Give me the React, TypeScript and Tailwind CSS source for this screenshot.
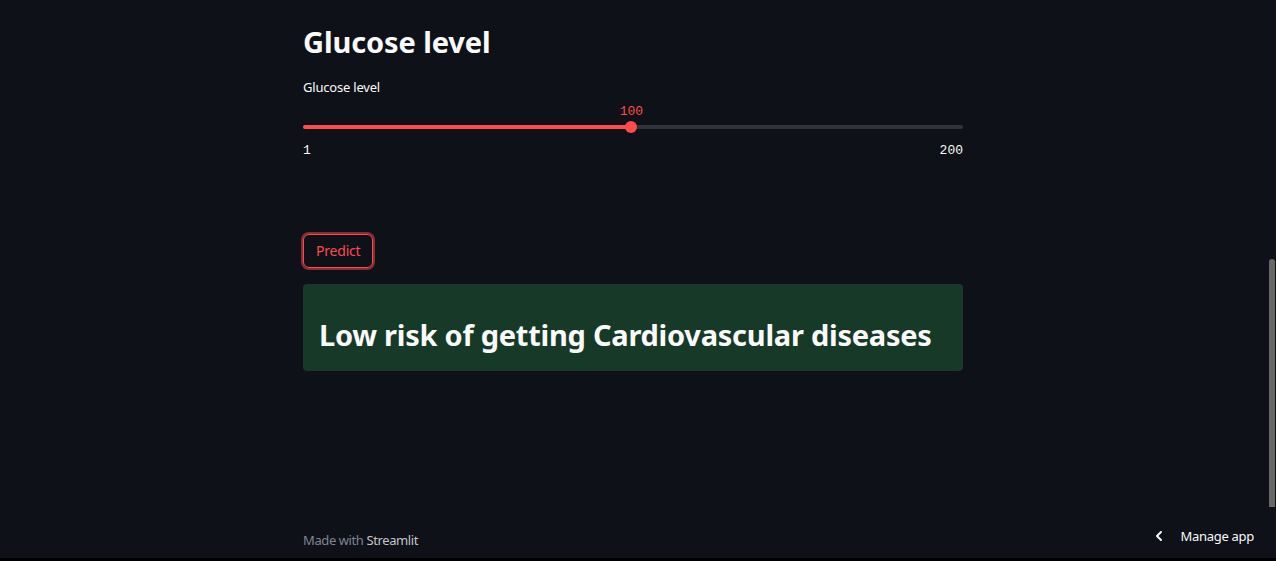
import { ChevronLeft } from "lucide-react";

const sans = { fontFamily: '"Noto Sans", "Open Sans", sans-serif' };

function Slider({ min, max, value }: { min: number; max: number; value: number }) {
  const pct = ((value - min) / (max - min)) * 100;
  return (
    <div className="flex flex-col">
      <div className="relative h-[38px]">
        <div
          className="absolute top-[6px] -translate-x-1/2 font-['Liberation_Mono',monospace] text-[13px] leading-4 text-[#ff4b4b]"
          style={{ left: `${pct}%` }}
        >
          {value}
        </div>
        <div className="absolute left-0 right-0 top-[27px] h-1 rounded-full bg-[#31333a]" />
        <div className="absolute left-0 top-[27px] h-1 rounded-full bg-[#ff4b4b]" style={{ width: `${pct}%` }} />
        <div
          className="absolute top-[23px] h-3 w-3 -translate-x-1/2 rounded-full bg-[#ff4b4b]"
          style={{ left: `${pct}%` }}
        />
      </div>
      <div className="mt-[7px] flex justify-between font-['Liberation_Mono',monospace] text-[13px] leading-4 text-[#fafafa]">
        <span>{min}</span>
        <span>{max}</span>
      </div>
    </div>
  );
}

export default function App() {
  return (
    <div className="relative h-[561px] w-[1276px] overflow-hidden bg-[#0e1117] text-[#fafafa]" style={sans}>
      <div className="flex justify-center pr-[10px]">
        <main className="flex w-[660px] flex-col pt-[24px]">
          <h3 className="text-[29px] font-bold leading-[36px] tracking-[-0.1px]">Glucose level</h3>
          <label className="mt-[17px] text-[13px] leading-5 tracking-[-0.2px]">Glucose level</label>
          <div className="mt-[1px]">
            <Slider min={1} max={200} value={100} />
          </div>
          <div className="mt-[75px]">
            <button className="rounded-[6px] border border-[#ff4b4b] px-3 py-[6px] text-[14px] leading-5 tracking-[-0.2px] text-[#ff4b4b] shadow-[0_0_0_2px_rgba(255,75,75,0.5)]">
              Predict
            </button>
          </div>
          <div className="mt-[16px] flex h-[87px] items-end rounded-[4px] bg-[#173928] px-4 pb-[16px]">
            <p className="whitespace-nowrap text-[29px] font-bold leading-[40px] tracking-[-0.25px] text-[#fafafa]">
              Low risk of getting Cardiovascular diseases
            </p>
          </div>
        </main>
      </div>

      <footer className="absolute bottom-[13px] left-[303px] text-[13px] leading-4 tracking-[-0.4px] text-[#808495]">
        Made with <span className="text-[#c4c6cc]">Streamlit</span>
      </footer>

      <div className="absolute bottom-[15px] right-[22px] flex items-center gap-[14px] text-[13px] leading-5 tracking-[-0.3px] text-[#fafafa]">
        <ChevronLeft size={16} strokeWidth={3} />
        <span>Manage app</span>
      </div>

      <div className="absolute right-[1px] top-[259px] h-[248px] w-[6px] rounded-t-sm bg-[#686868]" />
      <div className="absolute bottom-0 left-0 right-0 h-[3px] bg-black" />
    </div>
  );
}
